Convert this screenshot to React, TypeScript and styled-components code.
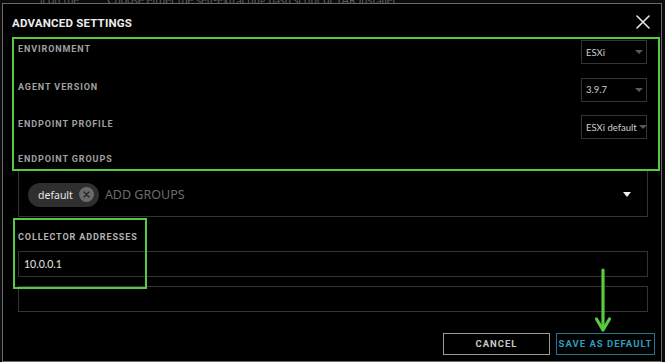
import React from 'react';
import styled, { createGlobalStyle } from 'styled-components';

const GlobalStyle = createGlobalStyle`
  html, body {
    margin: 0;
    padding: 0;
    background: #0b0b0b;
    width: 665px;
    height: 362px;
    overflow: hidden;
  }
`;

const heading = `Roboto, "Liberation Sans", sans-serif`;

const Page = styled.div`
  position: relative;
  width: 665px;
  height: 362px;
  overflow: hidden;
`;

const BehindText = styled.div`
  height: 3px;
  overflow: hidden;
  padding-left: 40px;
  font-family: Lato, sans-serif;
  font-size: 11px;
  line-height: 6px;
  color: #5e5e5e;
  white-space: nowrap;
  span {
    display: inline-block;
    transform: translateY(-3px);
  }
`;

const Modal = styled.div`
  box-sizing: border-box;
  margin-left: 2px;
  width: 660px;
  height: 359px;
  border: 1px solid #6a6a6a;
  background: #000;
  display: flex;
  flex-direction: column;
`;

const Header = styled.div`
  display: flex;
  align-items: center;
  justify-content: space-between;
  height: 36px;
  padding: 0 10px 0 9px;
`;

const Title = styled.h2`
  margin: 0;
  padding-top: 1px;
  font-family: ${heading};
  font-weight: 700;
  font-size: 11.5px;
  letter-spacing: 0.2px;
  color: #ececec;
`;

const Close = styled.button`
  background: none;
  border: none;
  padding: 0;
  width: 16px;
  height: 16px;
  display: flex;
  cursor: pointer;
`;

const Body = styled.div`
  display: flex;
  flex-direction: column;
  padding: 0 14px 0 15px;
`;

const FieldRow = styled.div`
  display: flex;
  align-items: flex-start;
  justify-content: space-between;
  height: 37.5px;
`;

const Label = styled.div<{ $bright?: boolean }>`
  font-family: ${heading};
  font-weight: 700;
  font-size: 9px;
  line-height: 12px;
  letter-spacing: 0.9px;
  color: ${(p) => (p.$bright ? '#b4b4b4' : '#a0a0a0')};
`;

const RowLabel = styled(Label)`
  margin-top: 3px;
`;

const Select = styled.div`
  box-sizing: border-box;
  width: 66px;
  height: 24px;
  border: 1px solid #343434;
  display: flex;
  align-items: center;
  justify-content: space-between;
  padding: 0 3px 0 4px;
  font-family: Lato, sans-serif;
  font-size: 9.5px;
  color: #cfcfcf;
  white-space: nowrap;
  &::after {
    content: '';
    border-left: 4px solid transparent;
    border-right: 4px solid transparent;
    border-top: 4px solid #5a5a5a;
    margin-left: 2px;
    flex: none;
  }
`;

const GroupsLabelRow = styled.div`
  height: 17px;
`;

const GroupsBox = styled.div`
  box-sizing: border-box;
  height: 47px;
  margin-right: -1px;
  border: 1px solid #333;
  display: flex;
  align-items: center;
  padding: 3px 16px 0 9px;
  gap: 6px;
`;

const Chip = styled.div`
  display: flex;
  align-items: center;
  gap: 6px;
  height: 24px;
  padding: 0 5px 0 10px;
  border-radius: 12px;
  background: #2f2f2f;
  font-family: "Noto Sans", sans-serif;
  font-size: 10.5px;
  color: #e6e6e6;
`;

const ChipX = styled.span`
  width: 15px;
  height: 15px;
  border-radius: 50%;
  background: #6b6b6b;
  display: flex;
  align-items: center;
  justify-content: center;
`;

const Placeholder = styled.span`
  flex: 1;
  font-family: "Noto Sans", sans-serif;
  font-size: 12.5px;
  color: #6c6c6c;
`;

const Caret = styled.span`
  border-left: 4px solid transparent;
  border-right: 4px solid transparent;
  border-top: 5px solid #f0f0f0;
`;

const CollectorLabel = styled.div`
  margin: 14px 0 8px;
`;

const Input = styled.div<{ $gap?: number }>`
  box-sizing: border-box;
  height: 26px;
  margin-right: -1px;
  margin-top: ${(p) => p.$gap ?? 0}px;
  border: 1px solid #333;
  display: flex;
  align-items: center;
  padding-left: 5px;
  font-family: Lato, sans-serif;
  font-size: 10.5px;
  color: #e8e8e8;
`;

const Footer = styled.div`
  display: flex;
  justify-content: flex-end;
  gap: 6px;
  margin-right: -8px;
  padding-top: 21px;
`;

const Button = styled.button<{ $primary?: boolean }>`
  box-sizing: border-box;
  height: 22px;
  width: ${(p) => (p.$primary ? '99px' : '107px')};
  background: #000;
  border: 1px solid ${(p) => (p.$primary ? '#1b7890' : '#9a9a9a')};
  color: ${(p) => (p.$primary ? '#2e9cbf' : '#c8c8c8')};
  font-family: ${heading};
  font-weight: 700;
  font-size: 9.5px;
  letter-spacing: 1px;
  white-space: nowrap;
  padding: 0;
  cursor: pointer;
`;

const Highlight = styled.div<{ $x: number; $y: number; $w: number; $h: number }>`
  position: absolute;
  left: ${(p) => p.$x}px;
  top: ${(p) => p.$y}px;
  width: ${(p) => p.$w}px;
  height: ${(p) => p.$h}px;
  box-sizing: border-box;
  border: 2px solid #59c943;
  pointer-events: none;
`;

const Arrow = styled.svg`
  position: absolute;
  left: 594px;
  top: 268px;
  pointer-events: none;
`;

const fields = [
  { label: 'ENVIRONMENT', value: 'ESXi' },
  { label: 'AGENT VERSION', value: '3.9.7' },
  { label: 'ENDPOINT PROFILE', value: 'ESXi default' },
];

export default function App() {
  return (
    <Page>
      <GlobalStyle />
      <BehindText>
        <span>ll on the &nbsp;&nbsp;&nbsp;&nbsp;&nbsp;&nbsp;&nbsp;&nbsp; Choose either the self-extracting bash script or TAR installer</span>
      </BehindText>
      <Modal>
        <Header>
          <Title>ADVANCED SETTINGS</Title>
          <Close aria-label="close">
            <svg width="16" height="16" viewBox="0 0 16 16">
              <path d="M2 2 L14 14 M14 2 L2 14" stroke="#e6e6e6" strokeWidth="1.6" strokeLinecap="round" />
            </svg>
          </Close>
        </Header>
        <Body>
          {fields.map((f) => (
            <FieldRow key={f.label}>
              <RowLabel>{f.label}</RowLabel>
              <Select>{f.value}</Select>
            </FieldRow>
          ))}
          <GroupsLabelRow>
            <Label>ENDPOINT GROUPS</Label>
          </GroupsLabelRow>
          <GroupsBox>
            <Chip>
              default
              <ChipX>
                <svg width="7" height="7" viewBox="0 0 7 7">
                  <path d="M1 1 L6 6 M6 1 L1 6" stroke="#262626" strokeWidth="1.4" strokeLinecap="round" />
                </svg>
              </ChipX>
            </Chip>
            <Placeholder>ADD GROUPS</Placeholder>
            <Caret />
          </GroupsBox>
          <CollectorLabel>
            <Label $bright>COLLECTOR ADDRESSES</Label>
          </CollectorLabel>
          <Input>10.0.0.1</Input>
          <Input $gap={9} />
          <Footer>
            <Button>CANCEL</Button>
            <Button $primary>SAVE AS DEFAULT</Button>
          </Footer>
        </Body>
      </Modal>
      <Highlight $x={12} $y={37} $w={648} $h={134} />
      <Highlight $x={13} $y={218} $w={134} $h={71} />
      <Arrow width="20" height="66" viewBox="0 0 20 66">
        <path d="M9 2 L9 60" stroke="#59c943" strokeWidth="3.2" strokeLinecap="round" />
        <path d="M2.5 51 L9 62 L15.5 51" fill="none" stroke="#59c943" strokeWidth="3.2" strokeLinecap="round" strokeLinejoin="round" />
      </Arrow>
    </Page>
  );
}
